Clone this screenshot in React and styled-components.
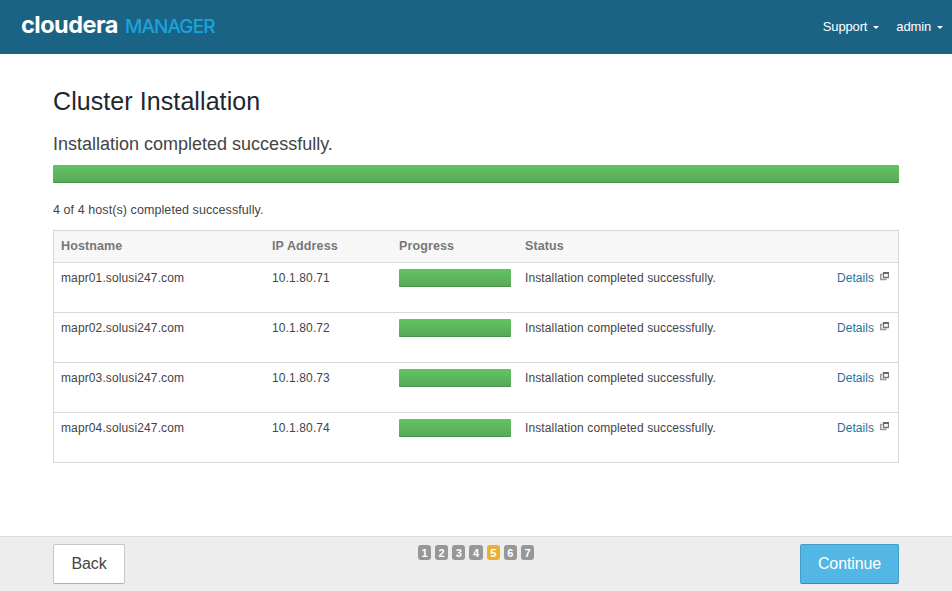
import React from "react";
import styled, { createGlobalStyle } from "styled-components";

const GlobalStyle = createGlobalStyle`
  * { box-sizing: border-box; }
  body {
    margin: 0;
    background: #fff;
    color: #444;
    font: 12px/20px "Liberation Sans", Arial, sans-serif;
  }
`;

const Page = styled.div`
  display: flex;
  flex-direction: column;
  height: 100vh;
  min-height: 591px;
`;

const Header = styled.header`
  display: flex;
  justify-content: space-between;
  height: 54px;
  padding: 0 9px 0 21px;
  background: #1a6384;
`;

const Brand = styled.div`
  display: flex;
  align-items: baseline;
  height: 50px;
  line-height: 50px;
  white-space: nowrap;
`;

const BrandName = styled.span`
  width: 104px;
  color: #fff;
  font: 700 23.5px/49px Inter, sans-serif;
  letter-spacing: -0.5px;
`;

const BrandProduct = styled.span`
  color: #1ba3dc;
  font: 500 19px/49px Inter, sans-serif;
  letter-spacing: -0.9px;
`;

const Nav = styled.nav`
  display: flex;
  gap: 17px;
  height: 54px;
`;

const NavItem = styled.a`
  display: flex;
  align-items: center;
  gap: 6px;
  color: #fff;
  font-size: 13px;
  letter-spacing: -0.15px;
`;

const Caret = styled.i`
  border: 3px solid transparent;
  border-top-color: #fff;
  border-bottom: 0;
`;

const Main = styled.main`
  flex: 1;
  padding: 32px 53px 0;
`;

const Title = styled.h1`
  margin: 0;
  color: #22272e;
  font-size: 25px;
  font-weight: 400;
  line-height: 30px;
  letter-spacing: 0.08px;
`;

const Subtitle = styled.h2`
  margin: 18px 0 11px;
  font-size: 18px;
  font-weight: 400;
  line-height: 20px;
`;

const Bar = styled.div`
  height: 18px;
  border-radius: 1px;
  background: linear-gradient(#62c462, #57a957);
  box-shadow: inset 0 -1px 0 rgba(0, 0, 0, 0.15);
`;

const Summary = styled.p`
  margin: 17px 0 10px;
  font-size: 12.5px;
  letter-spacing: 0.08px;
`;

const Table = styled.div`
  border: 1px solid #d9d9d9;
`;

const Row = styled.div`
  display: grid;
  grid-template-columns: 211px 127px 126px 1fr auto;
  height: 50px;
  padding: 5px 9px 0 7px;
  border-top: 1px solid #d9d9d9;
  letter-spacing: 0.12px;
`;

const HeadRow = styled(Row)`
  height: 31px;
  padding-top: 4.5px;
  border-top: 0;
  background: #f7f7f7;
  color: #777;
  font-size: 12.5px;
  font-weight: 700;
`;

const ProgressCell = styled.div`
  padding: 1px 14px 0 0;
`;

const Details = styled.a`
  display: flex;
  gap: 6px;
  color: #1f7399;
  letter-spacing: 0.05px;
`;

const PopupIcon = styled.svg`
  margin-top: 4px;
`;

const Footer = styled.footer`
  display: grid;
  grid-template-columns: 1fr auto 1fr;
  height: 55px;
  padding: 7px 53px 0;
  border-top: 1px solid #ddd;
  background: #ededed;
`;

const Button = styled.button`
  justify-self: ${(p) => (p.$primary ? "end" : "start")};
  width: ${(p) => (p.$primary ? 99 : 72)}px;
  height: 40px;
  padding: 0;
  border: 1px solid ${(p) => (p.$primary ? "#429dc7" : "#c6c6c6")};
  border-bottom-color: ${(p) => (p.$primary ? "#388bb1" : "#b0b0b0")};
  border-radius: 2px;
  background: ${(p) => (p.$primary ? "#52b7e4" : "#fff")};
  color: ${(p) => (p.$primary ? "#fff" : "#444")};
  font: 16px/36px "Liberation Sans", Arial, sans-serif;
  letter-spacing: -0.1px;
`;

const Steps = styled.div`
  display: flex;
  gap: 4px;
  margin-top: 1px;
`;

const Step = styled.span`
  width: 13.2px;
  height: 15px;
  border-radius: 3px;
  background: ${(p) => (p.$active ? "#e9b034" : "#979797")};
  color: #fff;
  font-size: 11px;
  font-weight: 700;
  line-height: 16px;
  text-align: center;
`;

const hosts = [1, 2, 3, 4].map((n) => ({
  name: `mapr0${n}.solusi247.com`,
  ip: `10.1.80.7${n}`,
}));

export default function App() {
  return (
    <Page>
      <GlobalStyle />
      <Header>
        <Brand>
          <BrandName>cloudera</BrandName>
          <BrandProduct>MANAGER</BrandProduct>
        </Brand>
        <Nav>
          <NavItem>Support<Caret /></NavItem>
          <NavItem>admin<Caret /></NavItem>
        </Nav>
      </Header>
      <Main>
        <Title>Cluster Installation</Title>
        <Subtitle>Installation completed successfully.</Subtitle>
        <Bar />
        <Summary>4 of 4 host(s) completed successfully.</Summary>
        <Table>
          <HeadRow>
            <span>Hostname</span>
            <span>IP Address</span>
            <span>Progress</span>
            <span>Status</span>
          </HeadRow>
          {hosts.map((host) => (
            <Row key={host.name}>
              <span>{host.name}</span>
              <span>{host.ip}</span>
              <ProgressCell><Bar /></ProgressCell>
              <span>Installation completed successfully.</span>
              <Details>
                Details
                <PopupIcon width="9" height="9" viewBox="0 0 9 9" fill="none">
                  <path d="M2.5 2.5H.75v5h5V6.5" stroke="#999" strokeWidth="1.5" />
                  <path d="M3.5.5h5v5h-5z" stroke="#777" strokeWidth="1.3" />
                  <path d="M3 1h6" stroke="#666" strokeWidth="2" />
                </PopupIcon>
              </Details>
            </Row>
          ))}
        </Table>
      </Main>
      <Footer>
        <Button>Back</Button>
        <Steps>
          {[1, 2, 3, 4, 5, 6, 7].map((n) => (
            <Step key={n} $active={n === 5}>{n}</Step>
          ))}
        </Steps>
        <Button $primary>Continue</Button>
      </Footer>
    </Page>
  );
}
